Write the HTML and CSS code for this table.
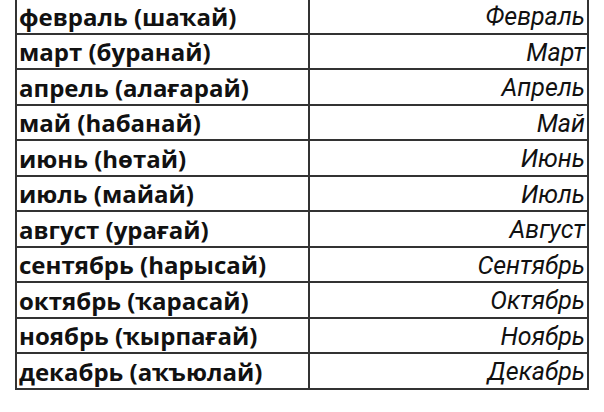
FILE: index.html
```html
<!DOCTYPE html>
<html lang="ba">
<head>
<meta charset="utf-8">
<link rel="stylesheet" href="styles.css">
</head>
<body>
<table class="months">
  <tr><td class="ba">февраль (шаҡай)</td><td class="ru">Февраль</td></tr>
  <tr><td class="ba">март (буранай)</td><td class="ru">Март</td></tr>
  <tr><td class="ba">апрель (алағарай)</td><td class="ru">Апрель</td></tr>
  <tr><td class="ba">май (һабанай)</td><td class="ru">Май</td></tr>
  <tr><td class="ba">июнь (һөтай)</td><td class="ru">Июнь</td></tr>
  <tr><td class="ba">июль (майай)</td><td class="ru">Июль</td></tr>
  <tr><td class="ba">август (урағай)</td><td class="ru">Август</td></tr>
  <tr><td class="ba">сентябрь (һарысай)</td><td class="ru">Сентябрь</td></tr>
  <tr><td class="ba">октябрь (ҡарасай)</td><td class="ru">Октябрь</td></tr>
  <tr><td class="ba">ноябрь (ҡырпағай)</td><td class="ru">Ноябрь</td></tr>
  <tr><td class="ba">декабрь (аҡъюлай)</td><td class="ru">Декабрь</td></tr>
</table>
</body>
</html>
```
FILE: styles.css
```css
html, body {
  margin: 0;
  padding: 0;
  background: #ffffff;
}
body {
  font-family: Roboto, "Noto Sans", "DejaVu Sans", sans-serif;
  color: #111;
  overflow: hidden;
}
.months {
  border-collapse: collapse;
  table-layout: fixed;
  width: 574px;
  margin: -3px 0 0 15px;
}
.months tr {
  height: 35.5px;
}
.months td {
  border: 2px solid #333;
  padding: 0 2px;
  line-height: 1;
  vertical-align: middle;
  white-space: nowrap;
}
.months .ba {
  width: 287px;
  font-family: "Open Sans", "Noto Sans", sans-serif;
  font-size: 24px;
  font-weight: 700;
  text-align: left;
  padding-top: 2px;
}
.months .ru {
  font-family: Roboto, "Noto Sans", sans-serif;
  font-size: 25px;
  font-style: italic;
  font-weight: 400;
  text-align: right;
  padding-top: 2px;
}
```
